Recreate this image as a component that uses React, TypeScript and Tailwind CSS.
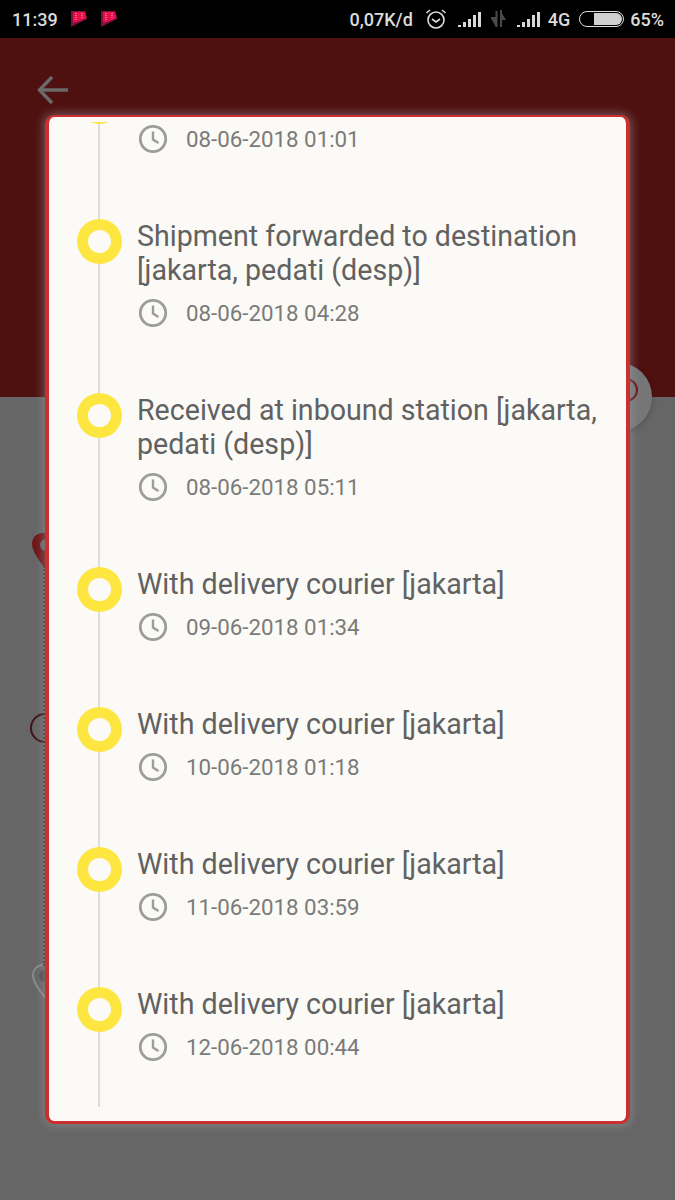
import React from "react";

const rows = [
  { title: "", date: "08-06-2018 01:01", clipped: true },
  { title: "Shipment forwarded to destination [jakarta, pedati (desp)]", date: "08-06-2018 04:28" },
  { title: "Received at inbound station [jakarta, pedati (desp)]", date: "08-06-2018 05:11" },
  { title: "With delivery courier [jakarta]", date: "09-06-2018 01:34" },
  { title: "With delivery courier [jakarta]", date: "10-06-2018 01:18" },
  { title: "With delivery courier [jakarta]", date: "11-06-2018 03:59" },
  { title: "With delivery courier [jakarta]", date: "12-06-2018 00:44" },
];

function Flag() {
  return (
    <svg width="16" height="16" viewBox="0 0 16 16" className="block">
      <path d="M0 0H14L16 6V8L0 16Z" fill="#7e1040" />
      <path d="M2 1H14L15 6V7.5L4 11.5H2Z" fill="#e8104a" />
      <path d="M5 2V10M11 2V8" stroke="#ffb0c4" strokeWidth="1" strokeDasharray="1 1" />
    </svg>
  );
}

function Signal() {
  return (
    <svg width="24" height="16" viewBox="0 0 24 16" fill="#d8d8d8" className="block">
      <rect x="0" y="14" width="3" height="2" />
      <rect x="5" y="11" width="3" height="5" />
      <rect x="10" y="8" width="3" height="8" />
      <rect x="15" y="4" width="3" height="12" />
      <rect x="20" y="1" width="3" height="15" />
    </svg>
  );
}

function Clock() {
  return (
    <svg width="30" height="30" viewBox="0 0 30 30" fill="none" stroke="#9c9c9c" className="block shrink-0">
      <circle cx="15" cy="15" r="12.7" strokeWidth="2.8" />
      <path d="M15 7.5V15.5L20.5 19" strokeWidth="2.4" />
    </svg>
  );
}

export default function App() {
  return (
    <div className="relative flex h-[1200px] w-[675px] flex-col overflow-hidden bg-[#666666]" style={{ fontFamily: "Roboto, sans-serif" }}>
      <div className="flex h-[38px] shrink-0 items-center justify-between bg-black pl-3 pr-[11px] text-[18px] font-medium text-[#dcdcdc]">
        <div className="flex items-center">
          <span className="mr-[13px]">11:39</span>
          <Flag />
          <span className="ml-[14px]"><Flag /></span>
        </div>
        <div className="flex items-center">
          <span>0,07K/d</span>
          <svg width="22" height="22" viewBox="0 0 22 22" fill="none" stroke="#dcdcdc" strokeWidth="1.6" className="ml-[12px] block">
            <circle cx="11" cy="12" r="8" />
            <path d="M7 11L11 14L15 11" />
            <path d="M1.5 5L5 2M20.5 5L17 2" />
          </svg>
          <span className="ml-[11px]"><Signal /></span>
          <svg width="18" height="18" viewBox="0 0 18 18" fill="#4a4a4a" className="ml-[8px] block">
            <path d="M6 17V7H1V8.5L6 17ZM10 0V10H16L10 0Z" />
            <path d="M5.5 17V1H7.5V17ZM10 0H12V17H10Z" />
          </svg>
          <span className="ml-[9px]"><Signal /></span>
          <span className="ml-[7px]">4G</span>
          <div className="ml-[9px] flex h-[16px] w-[45px] items-center justify-end rounded-full border border-[#dcdcdc] p-px">
            <div className="h-[12px] w-[28px] rounded-r-full bg-[#cfcfcf]" />
          </div>
          <span className="ml-[6px]">65%</span>
        </div>
      </div>

      <div className="h-[359px] shrink-0 bg-[#4f1010]" />
      <div className="flex-1 bg-[#666666]" />

      <svg width="32" height="30" viewBox="0 0 32 30" fill="none" stroke="#6a6a6a" strokeWidth="3.4" className="absolute left-[37px] top-[75px]">
        <path d="M31 15H3M15 2L2.5 15L15 28" />
      </svg>

      <div className="absolute left-[582px] top-[362px] size-[70px] rounded-full bg-[#767676] shadow-[0_2px_6px_rgba(0,0,0,0.2)]" />
      <div className="absolute left-[614px] top-[378px] size-[24px] rounded-full border-2 border-[#6e1416]" />

      <svg width="24" height="36" viewBox="0 0 24 36" className="absolute left-[31px] top-[532px]">
        <path d="M12 1C5 1 1 6 1 12C1 20 12 34 14 36V1Z" fill="#6e1618" />
        <circle cx="15" cy="13" r="6" fill="#666666" />
      </svg>
      <div className="absolute left-[43px] top-[566px] h-[400px] w-0 border-l-2 border-dotted border-[#5a2a2c]" />
      <div className="absolute left-[30px] top-[713px] size-[30px] rounded-full border-2 border-[#3d1416]" />
      <svg width="24" height="36" viewBox="0 0 24 36" className="absolute left-[31px] top-[963px]">
        <path d="M12 2C6 2 2 7 2 12C2 19 10 30 14 34" fill="none" stroke="#8a8a8a" strokeWidth="2" />
        <circle cx="14" cy="13" r="6" fill="#505050" />
      </svg>

      <div className="absolute left-[45px] top-[115px] flex h-[1009px] w-[585px] flex-col rounded-[9px] border-x-4 border-b-[3px] border-t-2 border-[#c9302f] bg-[#fbfaf6] pb-[14px] pt-[5px] shadow-[0_0_10px_2px_rgba(160,160,160,0.45)]">
        <div className="relative overflow-hidden">
          <div className="absolute bottom-0 left-[49px] top-0 w-[2px] bg-[#dddddb]" />
          {rows.map((r, i) => (
            <div key={i} className={`relative flex pl-[28px] pr-[12px] ${i === rows.length - 1 ? "pb-[42px]" : "pb-[62px]"} ${r.clipped ? "-mt-[43px]" : ""}`}>
              <div className="flex size-[45px] shrink-0 items-center justify-center rounded-full bg-[#fde63f]">
                <div className="size-[23px] rounded-full bg-[#fbfaf6]" />
              </div>
              <div className="ml-[15px] min-w-0 flex-1">
                {r.clipped ? <div className="h-[34px]" /> : <div className="text-[28.6px] leading-[34px] text-[#616161]">{r.title}</div>}
                <div className="mt-[10px] flex h-[34px] items-center text-[22.3px] text-[#7a7a7a]">
                  <span className="-mt-[2px] ml-[1px]"><Clock /></span>
                  <span className="ml-[18px]">{r.date}</span>
                </div>
              </div>
            </div>
          ))}
        </div>
      </div>
    </div>
  );
}
